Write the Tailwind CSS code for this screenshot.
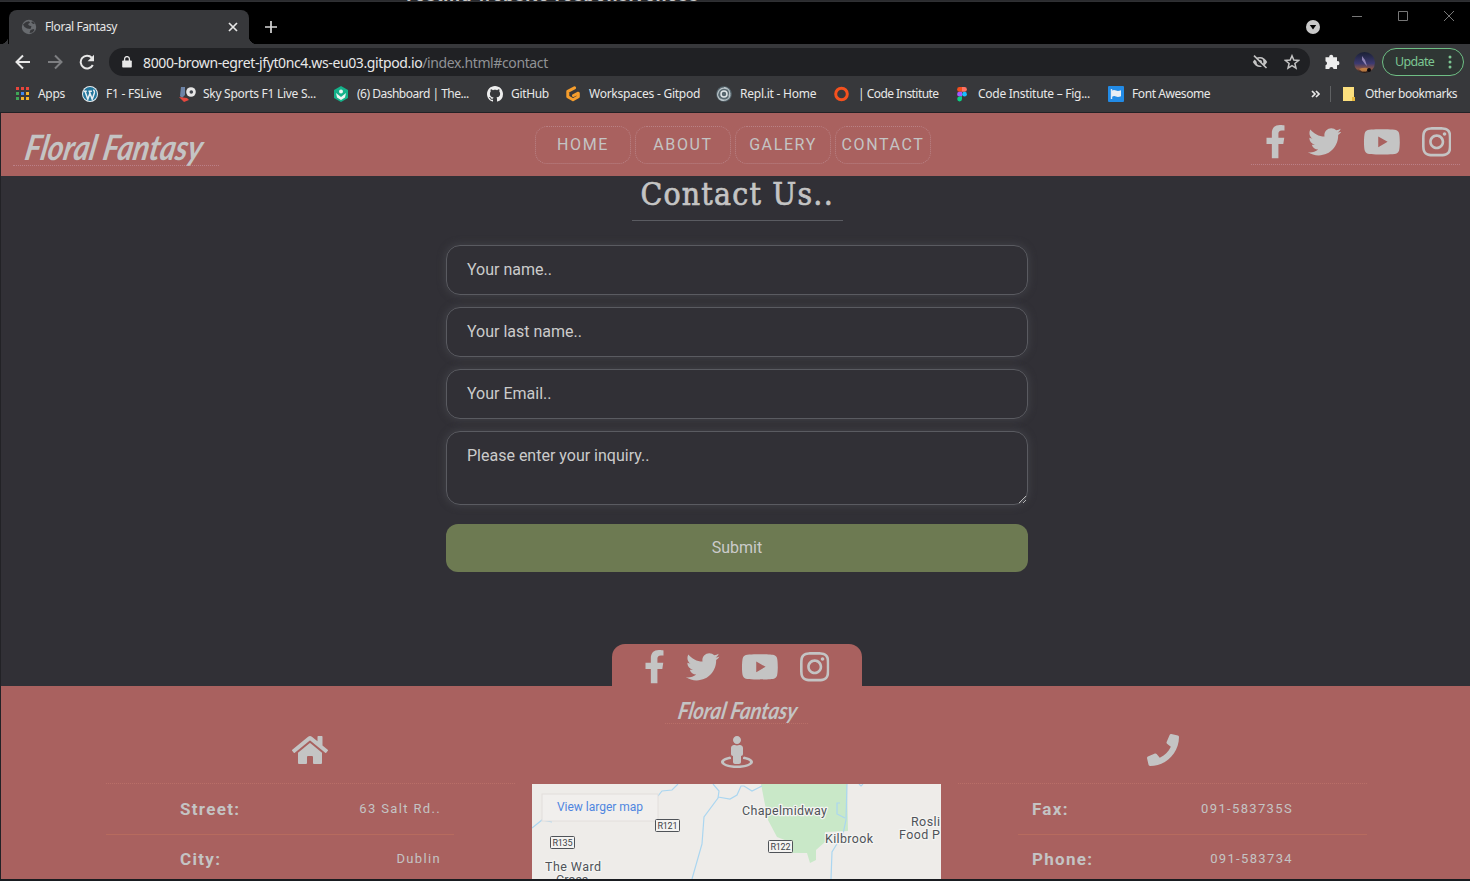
<!DOCTYPE html>
<html lang="en">
<head>
<meta charset="utf-8">
<title>Floral Fantasy</title>
<script src="https://cdn.jsdelivr.net/npm/@tailwindcss/browser@4"></script>
</head>
<body class="w-[1470px] h-[881px] overflow-hidden bg-[#313036] font-['Roboto',sans-serif] text-[#c4c4c4]">
<svg class="hidden">
  <symbol id="fb" viewBox="0 0 320 512"><path d="M279.14 288l14.22-92.66h-88.91v-60.13c0-25.35 12.42-50.06 52.24-50.06h40.42V6.26S260.43 0 225.36 0c-73.22 0-121.08 44.38-121.08 124.72v70.62H22.89V288h81.39v224h100.17V288z"/></symbol>
  <symbol id="tw" viewBox="0 0 512 512"><path d="M459.37 151.716c.325 4.548.325 9.097.325 13.645 0 138.72-105.583 298.558-298.558 298.558-59.452 0-114.68-17.219-161.137-47.106 8.447.974 16.568 1.299 25.34 1.299 49.055 0 94.213-16.568 130.274-44.832-46.132-.975-84.792-31.188-98.112-72.772 6.498.974 12.995 1.624 19.818 1.624 9.421 0 18.843-1.3 27.614-3.573-48.081-9.747-84.143-51.98-84.143-102.985v-1.299c13.969 7.797 30.214 12.67 47.431 13.319-28.264-18.843-46.781-51.005-46.781-87.391 0-19.492 5.197-37.36 14.294-52.954 51.655 63.675 129.3 105.258 216.365 109.807-1.624-7.797-2.599-15.918-2.599-24.04 0-57.828 46.782-104.934 104.934-104.934 30.213 0 57.502 12.67 76.67 33.137 23.715-4.548 46.456-13.32 66.599-25.34-7.798 24.366-24.366 44.833-46.132 57.827 21.117-2.273 41.584-8.122 60.426-16.243-14.292 20.791-32.161 39.308-52.628 54.253z"/></symbol>
  <symbol id="yt" viewBox="0 0 576 512"><path d="M549.655 124.083c-6.281-23.65-24.787-42.276-48.284-48.597C458.781 64 288 64 288 64S117.22 64 74.629 75.486c-23.497 6.322-42.003 24.947-48.284 48.597-11.412 42.867-11.412 132.305-11.412 132.305s0 89.438 11.412 132.305c6.281 23.65 24.787 41.5 48.284 47.821C117.22 448 288 448 288 448s170.78 0 213.371-11.486c23.497-6.321 42.003-24.171 48.284-47.821 11.412-42.867 11.412-132.305 11.412-132.305s0-89.438-11.412-132.305zm-317.51 213.508V175.185l142.739 81.205-142.739 81.201z"/></symbol>
  <symbol id="ig" viewBox="0 0 448 512"><path d="M224.1 141c-63.6 0-114.9 51.3-114.9 114.9s51.3 114.9 114.9 114.9S339 319.5 339 255.9 287.7 141 224.1 141zm0 189.6c-41.1 0-74.7-33.5-74.7-74.7s33.5-74.7 74.7-74.7 74.7 33.5 74.7 74.7-33.6 74.7-74.7 74.7zm146.4-194.3c0 14.9-12 26.8-26.8 26.8-14.9 0-26.8-12-26.8-26.8s12-26.8 26.8-26.8 26.8 12 26.8 26.8zm76.1 27.2c-1.7-35.9-9.9-67.7-36.2-93.9-26.2-26.2-58-34.4-93.9-36.2-37-2.1-147.9-2.1-184.9 0-35.8 1.7-67.6 9.9-93.9 36.1s-34.4 58-36.2 93.9c-2.1 37-2.1 147.9 0 184.9 1.7 35.9 9.9 67.7 36.2 93.9s58 34.4 93.9 36.2c37 2.1 147.9 2.1 184.9 0 35.9-1.7 67.7-9.9 93.9-36.2 26.2-26.2 34.4-58 36.2-93.9 2.1-37 2.1-147.8 0-184.8zM398.8 388c-7.8 19.6-22.9 34.7-42.6 42.6-29.5 11.7-99.5 9-132.1 9s-102.7 2.6-132.1-9c-19.6-7.8-34.7-22.9-42.6-42.6-11.7-29.5-9-99.5-9-132.1s-2.6-102.7 9-132.1c7.8-19.6 22.9-34.7 42.6-42.6 29.5-11.7 99.5-9 132.1-9s102.7-2.6 132.1 9c19.6 7.8 34.7 22.9 42.6 42.6 11.7 29.5 9 99.5 9 132.1s2.7 102.7-9 132.1z"/></symbol>
</svg>

<!-- Strip of the window behind the browser -->
<div class="h-[2px] overflow-hidden bg-[#2a2b2e] border-b border-[#2f3033]">
  <div class="pl-[403px] -mt-[15px] h-5 leading-5 text-[19px] font-bold tracking-[0.75px] whitespace-nowrap text-[#c9c9c9]">Testing website responsiveness</div>
</div>

<!-- Tab strip -->
<div class="h-[42px] bg-black flex items-start text-[12px] font-['Noto_Sans',sans-serif]">
  <div class="self-end size-2 bg-[radial-gradient(circle_at_0_0,#000_8px,#37383b_8.5px)]"></div>
  <div class="mt-2 ml-px w-[240px] h-[34px] rounded-t-lg bg-[#37383b] flex items-center">
    <svg class="ml-3 size-4" viewBox="0 0 16 16"><circle cx="8" cy="8" r="7.2" fill="#686b6f"/><path d="M2 5.500 5 3l3-.8 1 1.600L7 5l1 1.500 2.500.8L9.500 10 6 9.500 3.500 8zM10 3l2 2 1.800-.2L12 2.500zM8.500 14l1-3 3-1 1 1-2 2.500z" fill="#37383b"/></svg>
    <span class="ml-2 w-[180px] whitespace-nowrap text-[#e6e6e6] tracking-[-0.4px]">Floral Fantasy</span>
    <svg class="ml-[2px] size-3" viewBox="0 0 12 12" stroke="#e6e6e6" stroke-width="1.700"><path d="M2 2l8 8M10 2l-8 8"/></svg>
  </div>
  <div class="self-end size-2 bg-[radial-gradient(circle_at_100%_0,#000_8px,#37383b_8.5px)]"></div>
  <svg class="ml-2 mt-[19px] size-3" viewBox="0 0 12 12" stroke="#d8d8d8" stroke-width="1.700"><path d="M6 0v12M0 6h12"/></svg>
  <svg class="ml-auto mt-[18px] size-[14px]" viewBox="0 0 14 14"><circle cx="7" cy="7" r="7" fill="#c9c9c9"/><path d="M3.800 5h6.400L7 9.600z" fill="#000"/></svg>
  <svg class="ml-8 mt-[9px] size-[10px]" viewBox="0 0 10 10" stroke="#777"><path d="M0 5.500h10"/></svg>
  <svg class="ml-9 mt-[9px] size-[10px]" viewBox="0 0 10 10" stroke="#777" fill="none"><path d="M.5.5h9v9h-9z"/></svg>
  <svg class="ml-9 mr-4 mt-[9px] size-[10px]" viewBox="0 0 10 10" stroke="#777"><path d="M0 0l10 10M10 0L0 10"/></svg>
</div>

<!-- Toolbar -->
<div class="h-9 bg-[#37383b] flex items-center pl-[15px] font-['Noto_Sans',sans-serif]">
  <svg class="size-4" viewBox="0 0 16 16" fill="none" stroke="#e8e8e8" stroke-width="2"><path d="M15 8H2M8 1.500 1.500 8 8 14.500"/></svg>
  <svg class="ml-4 size-4" viewBox="0 0 16 16" fill="none" stroke="#7d7e81" stroke-width="2"><path d="M1 8h13M8 1.500 14.500 8 8 14.500"/></svg>
  <svg class="ml-4 size-4" viewBox="0 0 16 16"><path d="M13.800 11A6.400 6.400 0 1 1 12.800 3.700" fill="none" stroke="#e8e8e8" stroke-width="2"/><path d="M15 .8v6.400H8.600z" fill="#e8e8e8"/></svg>
  <div class="ml-[14px] w-[1201px] h-7 rounded-full bg-[#202124] flex items-center">
    <svg class="ml-[13px] w-[10px] h-3" viewBox="0 0 10 12"><path d="M1 4.500h8q.8 0 .8.8v5.400q0 .8-.8.8H1q-.8 0-.8-.8V5.300q0-.8.8-.8z" fill="#e8e8e8"/><path d="M2.600 5V3a2.400 2.400 0 0 1 4.800 0v2" fill="none" stroke="#e8e8e8" stroke-width="1.300"/></svg>
    <span class="ml-[11px] w-[1101px] whitespace-nowrap text-[14px] tracking-[-0.38px] text-[#e8e8e8]">8000-brown-egret-jfyt0nc4.ws-eu03.gitpod.io<span class="text-[#909295]">/index.html#contact</span></span>
    <svg class="ml-2 size-4" viewBox="0 0 16 16"><path d="M.8 8C2.400 5 5 3 8 3s5.600 2 7.200 5c-1.600 3-4.200 5-7.200 5S2.400 11 .8 8z" fill="#c4c4c4"/><circle cx="8" cy="8" r="3.400" fill="#202124"/><circle cx="8" cy="8" r="2" fill="#c4c4c4"/><path d="M1 2.600 13.500 15" stroke="#202124" stroke-width="2"/><path d="M2 1.600 14.500 14" stroke="#c4c4c4" stroke-width="1.600"/></svg>
    <svg class="ml-4 size-4" viewBox="0 0 16 16" fill="none" stroke="#c4c4c4" stroke-width="1.500"><path d="M8 1.800l1.800 4.300 4.700.4-3.600 3 1.100 4.600L8 11.700l-4 2.400 1.100-4.600-3.600-3 4.700-.4z"/></svg>
  </div>
  <svg class="ml-[14px] size-4" viewBox="0 0 16 16" fill="#eee"><path d="M1.500 3.300h3.800a2 2 0 1 1 3.800 0H13v3.900a2 2 0 1 1 0 3.900V15H9.500a2.100 2.100 0 0 0-4.200 0H1.500v-3.800a2 2 0 0 0 0-3.900z"/></svg>
  <svg class="ml-[14px] size-[21px]" viewBox="0 0 21 21"><defs><linearGradient id="sky" x1="0" y1="0" x2="0" y2="1"><stop offset="0" stop-color="#1a2035"/><stop offset=".55" stop-color="#3d3a70"/><stop offset=".8" stop-color="#8a5545"/><stop offset="1" stop-color="#1a1210"/></linearGradient></defs><circle cx="10.500" cy="10.500" r="10.500" fill="url(#sky)"/><path d="M8 4l3 4 2 6-2-2-3-4z" fill="#b6a7d8" opacity=".7"/><path d="M5 17q6-2 10-.5l-3 3H8z" fill="#d08a45" opacity=".8"/><circle cx="15" cy="18" r="2" fill="#0c0a0c"/></svg>
  <div class="ml-[7px] w-[82px] h-7 rounded-full border border-[#6fbf85] bg-[#2f3634] flex items-center text-[#7cc692] text-[12.5px]">
    <span class="ml-3 w-[46px] whitespace-nowrap tracking-[-0.65px]">Update</span>
    <svg class="ml-[7px] w-1 h-[14px]" viewBox="0 0 4 14" fill="#7cc692"><circle cx="2" cy="2" r="1.500"/><circle cx="2" cy="7" r="1.500"/><circle cx="2" cy="12" r="1.500"/></svg>
  </div>
</div>

<!-- Bookmarks bar -->
<div class="h-[33px] bg-[#37383b] border-b border-[#222226] flex items-start pt-[6px] pl-[14px] text-[12px] leading-4 tracking-[-0.32px] text-[#e8e8e8] whitespace-nowrap font-['Noto_Sans',sans-serif]">
  <div class="w-[68px] flex gap-2"><svg class="size-4" viewBox="0 0 16 16"><g fill="#e8453c"><path d="M2 1h3v3H2zM7 1h3v3H7zM12 1h3v3h-3z"/></g><path d="M2 6h3v3H2zM2 11h3v3H2z" fill="#3fa757"/><path d="M7 6h3v3H7z" fill="#3f87f0"/><path d="M12 6h3v3h-3zM7 11h3v3H7zM12 11h3v3h-3z" fill="#f3b32a"/></svg>Apps</div>
  <div class="w-[97px] flex gap-2 tracking-[-0.25px]"><svg class="size-4" viewBox="0 0 16 16"><circle cx="8" cy="8" r="8" fill="#e8eef2"/><circle cx="8" cy="8" r="7" fill="#21759b"/><path d="M1.800 5.200h3M6.500 5.200h3.400M3 5.200l2.800 8 2-5.800M7.300 5.200l2.900 8 2.200-6.200q.4-1.800-1-3.200" fill="none" stroke="#e8eef2" stroke-width="1.500"/></svg>F1 - FSLive</div>
  <div class="w-[154px] flex gap-2 tracking-[-0.28px]"><svg class="size-4 overflow-visible" viewBox="0 0 16 16"><path d="M2 1h4v8L3 12 1 10z" fill="#6d83a6"/><path d="M0 11l8 1 2 2-5 2z" fill="#e5483f"/><circle cx="12" cy="6" r="4.800" fill="#e6e6e6"/><circle cx="12.300" cy="6" r="1.800" fill="#40444c"/></svg>Sky Sports F1 Live S...</div>
  <div class="w-[154px] flex gap-2 tracking-[-0.5px]"><svg class="size-4" viewBox="0 0 16 16"><path d="M8 0l7 4v8l-7 4-7-4V4z" fill="#14b28a"/><path d="M3 7l5 4 5-4-1 4.500L8 14l-4-2.500z" fill="#eef5f2"/><circle cx="8" cy="5.500" r="2" fill="#eef5f2"/></svg>(6) Dashboard | The...</div>
  <div class="w-[78px] flex gap-2"><svg class="size-4" viewBox="0 0 16 16" fill="#eee"><path d="M8 0C3.580 0 0 3.580 0 8c0 3.540 2.290 6.530 5.470 7.590.4.070.55-.17.55-.38 0-.19-.010-.82-.010-1.490-2.010.37-2.530-.49-2.690-.94-.090-.23-.48-.94-.82-1.130-.28-.15-.68-.52-.010-.53.63-.010 1.080.58 1.230.82.72 1.210 1.870.87 2.330.66.070-.52.28-.87.51-1.070-1.780-.2-3.640-.89-3.640-3.950 0-.87.31-1.590.82-2.150-.080-.2-.36-1.020.080-2.120 0 0 .67-.21 2.200.82.64-.18 1.320-.27 2-.27s1.360.090 2 .27c1.530-1.040 2.200-.82 2.200-.82.44 1.100.16 1.920.080 2.120.51.56.82 1.270.82 2.150 0 3.070-1.870 3.750-3.650 3.950.29.25.54.73.54 1.480 0 1.070-.010 1.930-.010 2.200 0 .21.15.46.55.38A8.010 8.010 0 0 0 16 8c0-4.420-3.580-8-8-8z"/></svg>GitHub</div>
  <div class="w-[151px] flex gap-2 tracking-[-0.26px]"><svg class="size-4" viewBox="0 0 16 16" fill="none" stroke="#f59d2c" stroke-width="3" stroke-linecap="round" stroke-linejoin="round"><path d="M9.500 1.800 2.800 5.300v5.500L8 13.800l5.300-3V7.200L8.500 9.500"/></svg>Workspaces - Gitpod</div>
  <div class="w-[118px] flex gap-2 tracking-[-0.24px]"><svg class="size-4" viewBox="0 0 16 16" fill="none"><circle cx="8" cy="8" r="7.800" fill="#56666e"/><path d="M8 1.500a6 6 0 0 1 5 9M14 9a6 6 0 0 1-9.500 4M8 14.500a6 6 0 0 1-5.500-9M2 7a6 6 0 0 1 9-4" stroke="#b8c2c6" stroke-width="1.200"/><circle cx="8" cy="8" r="3" stroke="#dfe5e7" stroke-width="1.500"/></svg>Repl.it - Home</div>
  <div class="w-[120px] flex gap-2 tracking-[-0.55px]"><svg class="size-4" viewBox="0 0 16 16"><circle cx="7.500" cy="8" r="5.800" fill="none" stroke="#f4511e" stroke-width="3"/></svg>| Code Institute</div>
  <div class="w-[154px] flex gap-2 tracking-[-0.27px]"><svg class="size-4" viewBox="0 0 16 16"><path d="M8 1H5.500a2.400 2.400 0 0 0 0 4.800H8z" fill="#f24e1e"/><path d="M8 1h2.500a2.400 2.400 0 0 1 0 4.800H8z" fill="#ff7262"/><path d="M8 5.800H5.500a2.400 2.400 0 0 0 0 4.800H8z" fill="#a259ff"/><circle cx="10.500" cy="8.200" r="2.400" fill="#1abcfe"/><path d="M8 10.600H5.500A2.400 2.400 0 1 0 8 13z" fill="#0acf83"/></svg>Code Institute – Fig...</div>
  <div class="w-[203px] flex gap-2 tracking-[-0.42px]"><svg class="size-4" viewBox="0 0 16 16"><rect width="16" height="16" rx="1" fill="#228be6"/><path d="M3.500 3v10" stroke="#dfeaf5" stroke-width="1.400"/><path d="M4 4.500q2-1 4 0t5-.3v6q-3 1.200-5 .3t-4 .3z" fill="#e8eef5"/></svg>Font Awesome</div>
  <svg class="mt-1 w-[9px] h-2" viewBox="0 0 9 8" fill="none" stroke="#e8e8e8" stroke-width="1.700"><path d="M1 1l3 3-3 3M5 1l3 3-3 3"/></svg>
  <div class="ml-[10px] w-px h-4 bg-[#5f6163]"></div>
  <svg class="ml-3 mt-px w-3 h-[14px]" viewBox="0 0 12 14"><path d="M0 0h11v10h1v4H0z" fill="#fbdf7e"/><path d="M9 10h3v4H9z" fill="#e8b93c"/></svg>
  <span class="ml-[10px] tracking-[-0.48px]">Other bookmarks</span>
</div>

<div class="h-[766px] border-l border-[#222226] flex flex-col">
  <!-- Site header -->
  <header class="h-[63px] bg-[#a9615f] flex items-start">
    <div class="ml-[12px] mt-3 w-[206px] h-[41px] border-b border-dotted border-[#bb8088] pl-[13px] whitespace-nowrap">
      <span class="inline-block origin-left -skew-x-12 scale-x-[0.86] font-['Yellowtail','Lato',cursive] italic font-bold text-[35px] leading-[43px]">Floral Fantasy</span>
    </div>
    <nav class="ml-[316px] mt-[13px] flex gap-1 text-[16px] tracking-[1.6px]">
      <a class="w-24 h-[38px] rounded-xl border border-dotted border-[#b98286] flex items-center justify-center">HOME</a>
      <a class="w-24 h-[38px] rounded-xl border border-dotted border-[#b98286] flex items-center justify-center">ABOUT</a>
      <a class="w-24 h-[38px] rounded-xl border border-dotted border-[#b98286] flex items-center justify-center">GALERY</a>
      <a class="w-24 h-[38px] rounded-xl border border-dotted border-[#b98286] flex items-center justify-center">CONTACT</a>
    </nav>
    <div class="ml-[320px] mt-3 w-[209px] h-10 border-b border-dotted border-[#bb8088] flex gap-[21.5px] pl-[14px] fill-[#c4c4c4]">
      <svg class="w-[21px] h-[33.6px] shrink-0"><use href="#fb"/></svg><svg class="w-[33.6px] h-[33.6px] shrink-0"><use href="#tw"/></svg><svg class="w-[37.8px] h-[33.6px] shrink-0"><use href="#yt"/></svg><svg class="w-[29.4px] h-[33.6px] shrink-0"><use href="#ig"/></svg>
    </div>
  </header>

  <!-- Contact form -->
  <main class="h-[510px] flex flex-col items-center pl-[3px]">
    <h2 class="w-[211px] h-[45px] border-b border-[#5a5b61] flex justify-center whitespace-nowrap font-['Special_Elite','DejaVu_Serif',serif] text-[31px] leading-[36px]"><span class="scale-x-[0.92] tracking-[1.3px] [-webkit-text-stroke:0.7px_#c4c4c4]">Contact Us..</span></h2>
    <form class="mt-6 w-[582px] flex flex-col text-[16px] text-[#cbcbcb]">
      <div class="h-[50px] rounded-[14px] border border-[#5a5b61] shadow-[0_0_6px_2px_#3d3d43] flex items-center pl-5">Your name..</div>
      <div class="mt-3 h-[50px] rounded-[14px] border border-[#5a5b61] shadow-[0_0_6px_2px_#3d3d43] flex items-center pl-5">Your last name..</div>
      <div class="mt-3 h-[50px] rounded-[14px] border border-[#5a5b61] shadow-[0_0_6px_2px_#3d3d43] flex items-center pl-5">Your Email..</div>
      <div class="mt-3 h-[74px] rounded-[14px] border border-[#5a5b61] shadow-[0_0_6px_2px_#3d3d43] flex items-start justify-between pl-5"><span class="mt-3">Please enter your inquiry..</span>
        <svg class="self-end mr-px mb-px size-[7px]" viewBox="0 0 7 7" stroke="#c4c4c4" stroke-width=".9"><path d="M0 7l7-7M4 7l3-3"/></svg></div>
      <button class="mt-[19px] h-12 rounded-[12px] bg-[#6d7a52]">Submit</button>
    </form>
    <div class="mt-[72px] w-[250px] h-[42px] rounded-t-[13px] bg-[#a9615f] flex gap-[21.5px] pt-[6px] pl-[31.5px] fill-[#c4c4c4]">
      <svg class="w-[21px] h-[33.6px] shrink-0"><use href="#fb"/></svg><svg class="w-[33.6px] h-[33.6px] shrink-0"><use href="#tw"/></svg><svg class="w-[37.8px] h-[33.6px] shrink-0"><use href="#yt"/></svg><svg class="w-[29.4px] h-[33.6px] shrink-0"><use href="#ig"/></svg>
    </div>
  </main>

  <!-- Site footer -->
  <footer class="h-[193px] bg-[#a9615f] flex flex-col items-center pl-[2px]">
    <div class="mt-[10px] w-[143px] h-7 border-b border-dotted border-[#b96f68] flex justify-center whitespace-nowrap">
      <span class="ml-1 -skew-x-12 scale-x-[0.86] font-['Yellowtail','Lato',cursive] italic font-bold text-[23.5px] leading-7">Floral Fantasy</span>
    </div>
    <div class="mt-[10px] grid grid-cols-[409px_409px_409px] gap-x-[17px] w-[1261px]">
      <section>
        <div class="h-[50px] border-b border-dotted border-[#b96f68] flex justify-center"><svg class="w-9 h-8 fill-[#c4c4c4] -ml-[2px]" viewBox="0 0 576 512"><path d="M280.370 148.260L96 300.110V464a16 16 0 0 0 16 16l112.060-.29a16 16 0 0 0 15.920-16V368a16 16 0 0 1 16-16h64a16 16 0 0 1 16 16v95.640a16 16 0 0 0 16 16.050L464 480a16 16 0 0 0 16-16V300L295.670 148.260a12.190 12.190 0 0 0-15.300 0zM571.600 251.470L488 182.560V44.050a12 12 0 0 0-12-12h-56a12 12 0 0 0-12 12v72.610L318.470 43a48 48 0 0 0-61 0L4.340 251.470a12 12 0 0 0-1.600 16.900l25.500 31A12 12 0 0 0 45.150 301l235.220-193.740a12.190 12.190 0 0 1 15.300 0L530.900 301a12 12 0 0 0 16.900-1.600l25.500-31a12 12 0 0 0-1.700-16.930z"/></svg></div>
        <div class="w-[348px] h-[51px] border-b border-[#b76b5e] flex items-center justify-between pl-[74px] pr-[13px]"><b class="pt-[2px] text-[17px] tracking-[1.3px]">Street:</b><span class="text-[13px] tracking-[1.35px]">63 Salt Rd..</span></div>
        <div class="w-[348px] h-[44px] pt-[3px] flex items-center justify-between pl-[74px] pr-[13px]"><b class="pt-[3px] text-[17px] tracking-[1.3px]">City:</b><span class="text-[13px] tracking-[1.35px]">Dublin</span></div>
      </section>
      <section>
        <div class="h-[50px] flex justify-center pt-[2px]"><svg class="size-8 fill-[#c4c4c4]" viewBox="0 0 512 512"><path d="M367.900 329.760c-4.620 5.300-9.780 10.100-15.900 13.650v22.940c66.520 9.340 112 28.050 112 49.650 0 30.930-93.120 56-208 56S48 446.930 48 416c0-21.600 45.480-40.300 112-49.650v-22.940c-6.120-3.550-11.280-8.350-15.900-13.650C58.870 345.340 0 378.050 0 416c0 53.020 114.620 96 256 96s256-42.980 256-96c0-37.950-58.870-70.660-144.100-86.240zM256 128c35.350 0 64-28.650 64-64S291.350 0 256 0s-64 28.650-64 64 28.650 64 64 64zm-64 192v96c0 17.670 14.330 32 32 32h64c17.670 0 32-14.330 32-32v-96c17.670 0 32-14.330 32-32v-96c0-26.510-21.490-48-48-48h-11.800c-11.070 5.030-23.260 8-36.200 8s-25.130-2.970-36.200-8H208c-26.510 0-48 21.490-48 48v96c0 17.670 14.330 32 32 32z"/></svg></div>
        <svg class="w-[409px] h-[95px]" viewBox="0 0 409 95" font-family="Roboto">
          <rect width="409" height="95" fill="#eeece9"/>
          <path d="M229 0H315L316 47 293 48 293 58 284 66V76L278 79 275 69H258V58L245 53 236 36Z" fill="#c9e8c8"/>
          <g fill="none" stroke="#abd6f0" stroke-width="1.200"><path d="M0 44 10 36 20 38M126 12 130 7 140 6 146 0M181 0 187 7 186 14 172 33 170 60 160 95M186 13 198 15 205 11 209 2 212 2 220 7 230 2M315 0 314 36 311 50 300 68 299 95M327 0 329 2 331 0M308 19h-3v11l8 4"/></g>
          <rect x="10" y="10" width="116" height="27" fill="#f1efed" stroke="#e2dedc"/>
          <text x="25" y="27" font-size="12" textLength="86" fill="#4f86e0">View larger map</text>
          <g fill="#4f5358" font-size="12.500" stroke="#f4f4f2" stroke-width="2.500" paint-order="stroke" stroke-linejoin="round">
            <text x="210" y="31" textLength="85">Chapelmidway</text>
            <text x="293" y="59" textLength="48">Kilbrook</text>
            <text x="379" y="42" textLength="29">Rosli</text><text x="367" y="54.500" textLength="41">Food P</text>
            <text x="13" y="87" textLength="56">The Ward</text><text x="24" y="99.500">Cross</text>
          </g>
          <g fill="#f4f3f1" stroke="#4f5358"><rect x="123.500" y="35.500" width="24" height="12" rx="1"/><rect x="18.500" y="52.500" width="24" height="12" rx="1"/><rect x="236.500" y="56.500" width="24" height="12" rx="1"/></g>
          <g fill="#3f4348" font-size="9"><text x="125.500" y="45" textLength="20">R121</text><text x="20.500" y="62" textLength="20">R135</text><text x="238.500" y="66" textLength="20">R122</text></g>
        </svg>
      </section>
      <section>
        <div class="h-[50px] border-b border-dotted border-[#b96f68] flex justify-center"><svg class="size-8 fill-[#c4c4c4]" viewBox="0 0 512 512"><path d="M493.400 24.600l-104-24c-11.300-2.600-22.900 3.300-27.500 13.900l-48 112c-4.200 9.800-1.400 21.300 6.900 28l60.600 49.600c-36 76.700-98.900 140.500-177.200 177.200l-49.600-60.600c-6.800-8.300-18.200-11.100-28-6.900l-112 48C3.900 366.500-2 378.100.6 389.400l24 104C27.100 504.200 36.700 512 48 512c256.100 0 464-207.500 464-464 0-11.200-7.700-20.900-18.600-23.400z"/></svg></div>
        <div class="ml-[60px] w-[349px] h-[51px] border-b border-[#b76b5e] flex items-center justify-between pl-[14px] pr-[74px]"><b class="pt-[2px] text-[17px] tracking-[1.3px]">Fax:</b><span class="text-[13px] tracking-[1.35px]">091-583735S</span></div>
        <div class="ml-[60px] w-[349px] h-[44px] pt-[3px] flex items-center justify-between pl-[14px] pr-[74px]"><b class="pt-[3px] text-[17px] tracking-[1.3px]">Phone:</b><span class="text-[13px] tracking-[1.35px]">091-583734</span></div>
      </section>
    </div>
  </footer>
</div>
<div class="h-[2px] bg-[#191c20]"></div>
</body>
</html>
